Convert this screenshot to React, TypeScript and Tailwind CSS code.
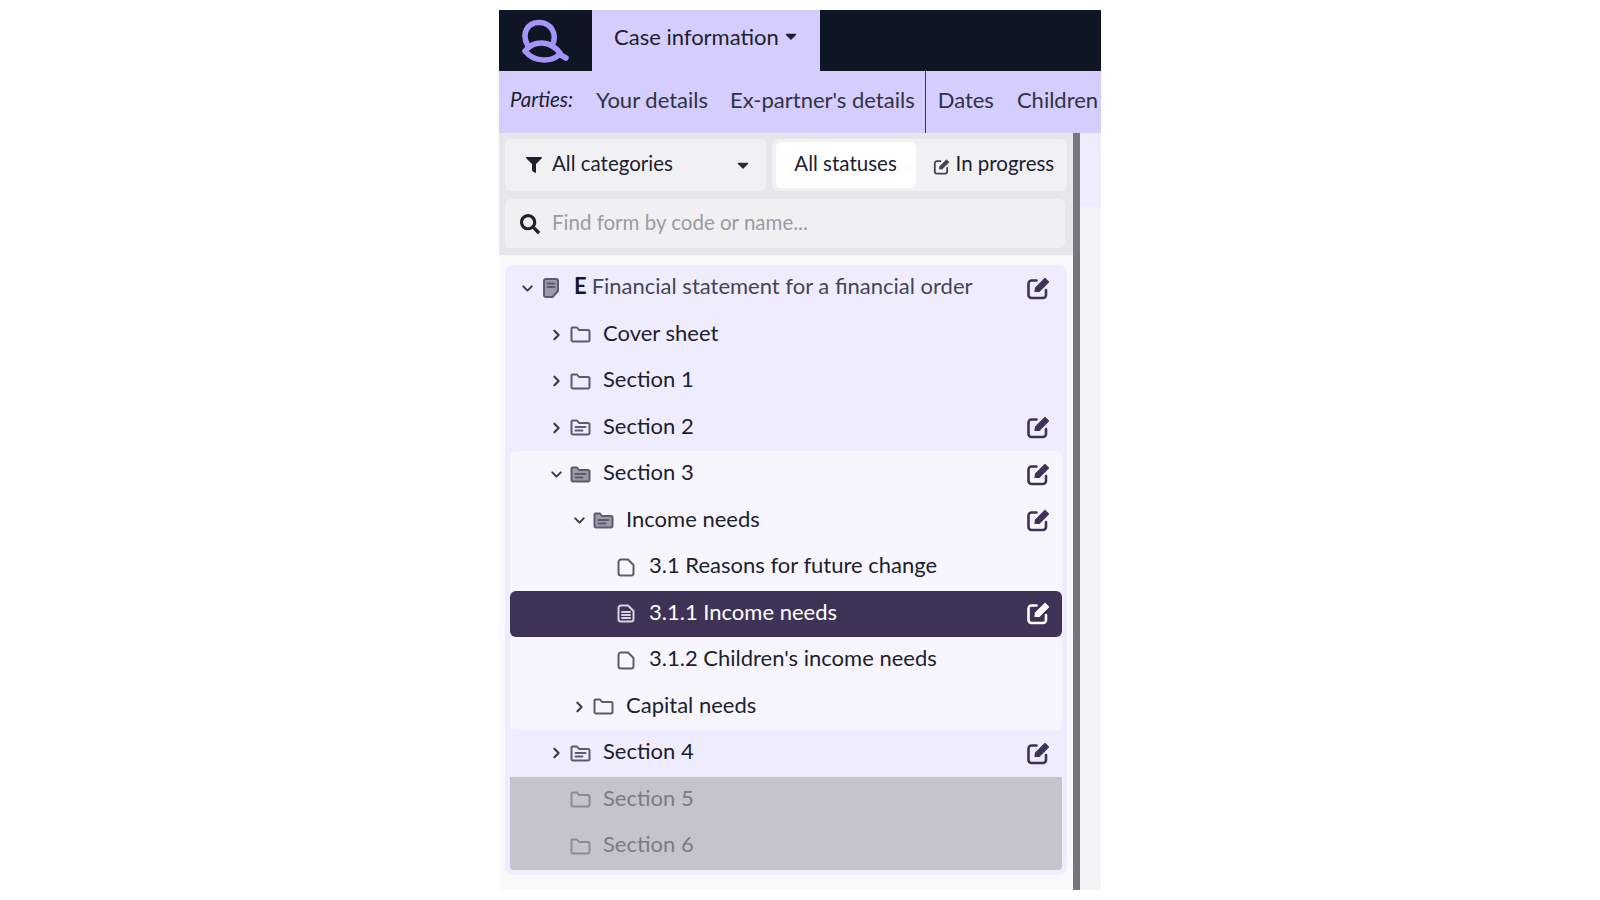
import { ChevronDown, ChevronRight } from "lucide-react";
import { FaFilter, FaSearch, FaCaretDown } from "react-icons/fa";

function Logo() {
  return (
    <svg width="48" height="44" viewBox="0 0 48 44" fill="none" stroke="#a594f9" strokeWidth="5.5" strokeLinecap="round">
      <path d="M6 27 C-1 15 5 3.5 17 3.5 C29 3.5 36 15 30 27" />
      <path d="M3 32 C12 21 28 21 38 34" />
      <path d="M4 33 C12 43 29 43 37 36" />
      <path d="M37 35 L44 39" />
    </svg>
  );
}

function EditIcon({ size, className }: { size: number; className?: string }) {
  return (
    <svg width={size} height={size} viewBox="0 0 24 24" fill="none" stroke="currentColor" className={className}>
      <path d="M10.5 4.5 H5.5 a3 3 0 0 0-3 3 V19 a3 3 0 0 0 3 3 H17 a3 3 0 0 0 3-3 V14" strokeWidth="2.6" strokeLinecap="round" />
      <path d="M9 15.5 L9.5 12 L19 2.5 L22.5 6 L13 15.5 Z" fill="currentColor" strokeWidth="1.2" strokeLinejoin="round" />
    </svg>
  );
}

function DocIcon({ type, color }: { type: "folder" | "folderLines" | "folderDark" | "blank" | "lines" | "form"; color: string }) {
  if (type === "folder" || type === "folderLines" || type === "folderDark") {
    return (
      <svg width="21" height="17" viewBox="0 0 21 17" fill={type === "folderDark" ? "#9d9aa8" : "none"} stroke={color} strokeWidth="2" strokeLinejoin="round">
        <path d="M1.5 14 V2.5 a1 1 0 0 1 1-1 H7 l2 2.5 h9 a1.5 1.5 0 0 1 1.5 1.5 V14 a1.5 1.5 0 0 1-1.5 1.5 H3 a1.5 1.5 0 0 1-1.5-1.5 Z" />
        {type !== "folder" && <path d="M5.5 8 H15.5 M5.5 11.5 H12.5" strokeLinecap="round" />}
      </svg>
    );
  }
  if (type === "form") {
    return (
      <svg width="16" height="20" viewBox="0 0 16 20" fill="#9d9aa8" stroke={color} strokeWidth="2" strokeLinejoin="round">
        <path d="M1 3 a2 2 0 0 1 2-2 H13 a2 2 0 0 1 2 2 V13 L9.5 19 H3 a2 2 0 0 1-2-2 Z" />
        <path d="M4.5 5.5 H11.5 M4.5 9 H11.5" fill="none" strokeLinecap="round" />
      </svg>
    );
  }
  return (
    <svg width="18" height="19" viewBox="0 0 18 19" fill="none" stroke={color} strokeWidth="2" strokeLinejoin="round">
      <path d="M1.5 4 a2.5 2.5 0 0 1 2.5-2.5 H11 l5.5 5.5 V15 a2.5 2.5 0 0 1-2.5 2.5 H4 a2.5 2.5 0 0 1-2.5-2.5 Z" />
      {type === "lines" && <path d="M5 8 H13 M5 11 H13 M5 14 H13" strokeLinecap="round" />}
    </svg>
  );
}

type Row = {
  label: string;
  depth: number;
  chevron?: "right" | "down";
  icon: "folder" | "folderLines" | "folderDark" | "blank" | "lines" | "form";
  edit?: boolean;
  prefix?: string;
  tone: "plain" | "open" | "active" | "off";
  rounded?: string;
};

const rows: Row[] = [
  { label: "Financial statement for a financial order", prefix: "E", depth: 0, chevron: "down", icon: "form", edit: true, tone: "plain" },
  { label: "Cover sheet", depth: 1, chevron: "right", icon: "folder", tone: "plain" },
  { label: "Section 1", depth: 1, chevron: "right", icon: "folder", tone: "plain" },
  { label: "Section 2", depth: 1, chevron: "right", icon: "folderLines", edit: true, tone: "plain" },
  { label: "Section 3", depth: 1, chevron: "down", icon: "folderDark", edit: true, tone: "open", rounded: "rounded-t-md" },
  { label: "Income needs", depth: 2, chevron: "down", icon: "folderDark", edit: true, tone: "open" },
  { label: "3.1 Reasons for future change", depth: 3, icon: "blank", tone: "open" },
  { label: "3.1.1 Income needs", depth: 3, icon: "lines", edit: true, tone: "active" },
  { label: "3.1.2 Children's income needs", depth: 3, icon: "blank", tone: "open" },
  { label: "Capital needs", depth: 2, chevron: "right", icon: "folder", tone: "open", rounded: "rounded-b-md" },
  { label: "Section 4", depth: 1, chevron: "right", icon: "folderLines", edit: true, tone: "plain" },
  { label: "Section 5", depth: 1, icon: "folder", tone: "off" },
  { label: "Section 6", depth: 1, icon: "folder", tone: "off", rounded: "rounded-b-sm" },
];

const depthPad = ["pl-[9px]", "pl-[38px]", "pl-[61px]", "pl-[84px]"];

function TreeRow({ row }: { row: Row }) {
  const toneClass =
    row.tone === "active"
      ? "bg-[#3f3257] text-white rounded-md"
      : row.tone === "open"
        ? "bg-[#f7f6fe] text-[#1c2130]"
        : row.tone === "off"
          ? "bg-[#c5c4cd] text-[#7b7a86]"
          : "text-[#1c2130]";
  const iconColor = row.tone === "active" ? "#d8d5e0" : row.tone === "off" ? "#8b8a96" : "#5c5a6e";
  return (
    <div className={`flex h-[46.5px] items-center pr-[12px] ${depthPad[row.depth]} ${toneClass} ${row.rounded ?? ""}`}>
      <span className="flex w-[17px] justify-center">
        {row.chevron === "right" && <ChevronRight size={18} strokeWidth={3} className="text-[#3a3a48]" />}
        {row.chevron === "down" && <ChevronDown size={19} strokeWidth={2.8} className="text-[#3a3a48]" />}
      </span>
      <span className="ml-[3px] flex w-[24px] justify-center">
        <DocIcon type={row.icon} color={iconColor} />
      </span>
      {row.prefix && <span className="ml-[11px] pb-[5px] font-bold text-[#14182a]">{row.prefix}</span>}
      <span className={`pb-[5px] ${row.prefix ? "ml-[5px] text-[#454655]" : "ml-[11px]"}`}>{row.label}</span>
      {row.edit && (
        <EditIcon size={24} className={`ml-auto -mt-[1px] ${row.tone === "active" ? "text-white" : "text-[#3f3257]"}`} />
      )}
    </div>
  );
}

export default function App() {
  return (
    <div className="flex h-[900px] justify-center overflow-hidden bg-white pt-[10px] font-['Lato','Liberation_Sans',sans-serif] text-[22px]">
      <div className="flex h-[880px] w-[602px] flex-col">
        <header className="flex h-[61px] shrink-0 bg-[#0f1623]">
          <div className="flex w-[93px] items-center justify-center">
            <Logo />
          </div>
          <div className="flex w-[228px] items-start gap-[5px] bg-[#d4cdfd] pl-[22px] pt-[10px] text-[#1c2130]">
            Case information
            <FaCaretDown size={18} className="mt-[7px] -ml-[2px]" />
          </div>
        </header>

        <nav className="flex h-[62px] shrink-0 items-center bg-[#d4cdfd] pb-[6px] pl-[11px] text-[#2f3344]">
          <span className="text-[20.5px] italic text-[#1c2130]">Parties:</span>
          <span className="ml-[23px]">Your details</span>
          <span className="ml-[22px]">Ex-partner's details</span>
          <span className="ml-[10px] -mb-[6px] flex h-[62px] items-center border-l border-[#3a3550] pb-[6px] pl-[12px]">Dates</span>
          <span className="ml-[23px]">Children</span>
        </nav>

        <div className="flex min-h-0 flex-1">
          <div className="flex w-[581px] shrink-0 flex-col border-r-[7px] border-[#77757f] bg-[#f9f9fb]">
            <div className="flex flex-col gap-[8px] bg-[#e7e7eb] px-[6px] pt-[6px] pb-[7px] text-[20.5px] text-[#1c2130]">
              <div className="flex h-[52px] gap-[6px]">
                <div className="flex w-[261px] items-center rounded-md bg-[#f1f1f4] pb-[4px] pl-[21px] pr-[14px]">
                  <FaFilter size={16} className="mt-[3px] text-[#1c2130]" />
                  <span className="ml-[10px]">All categories</span>
                  <FaCaretDown size={18} className="ml-auto mt-[4px] text-[#2a2a36]" />
                </div>
                <div className="flex w-[296px] items-center rounded-md bg-[#f1f1f4] pl-[4px]">
                  <div className="flex h-[46px] w-[140px] items-center justify-center rounded-md bg-white pb-[4px]">All statuses</div>
                  <EditIcon size={17} className="ml-[17px] mt-[2px] text-[#454655]" />
                  <span className="ml-[6px] pb-[4px]">In progress</span>
                </div>
              </div>
              <div className="mr-[2px] flex h-[49px] items-center rounded-md bg-[#f0f0f3] pl-[15px]">
                <FaSearch size={20} className="text-[#1c2130]" />
                <span className="ml-[12px] pb-[2px] text-[#9b9ba3]">Find form by code or name...</span>
              </div>
            </div>
            <div className="px-[6px] pt-[10px]">
              <div className="rounded-lg bg-[#efecfe] px-[5px] pb-[5px]">
                {rows.map((row) => (
                  <TreeRow key={row.label} row={row} />
                ))}
              </div>
            </div>
          </div>
          <div className="flex-1 bg-[#f3f3f5]">
            <div className="h-[74px] bg-[#efecfe]" />
          </div>
        </div>
      </div>
    </div>
  );
}
